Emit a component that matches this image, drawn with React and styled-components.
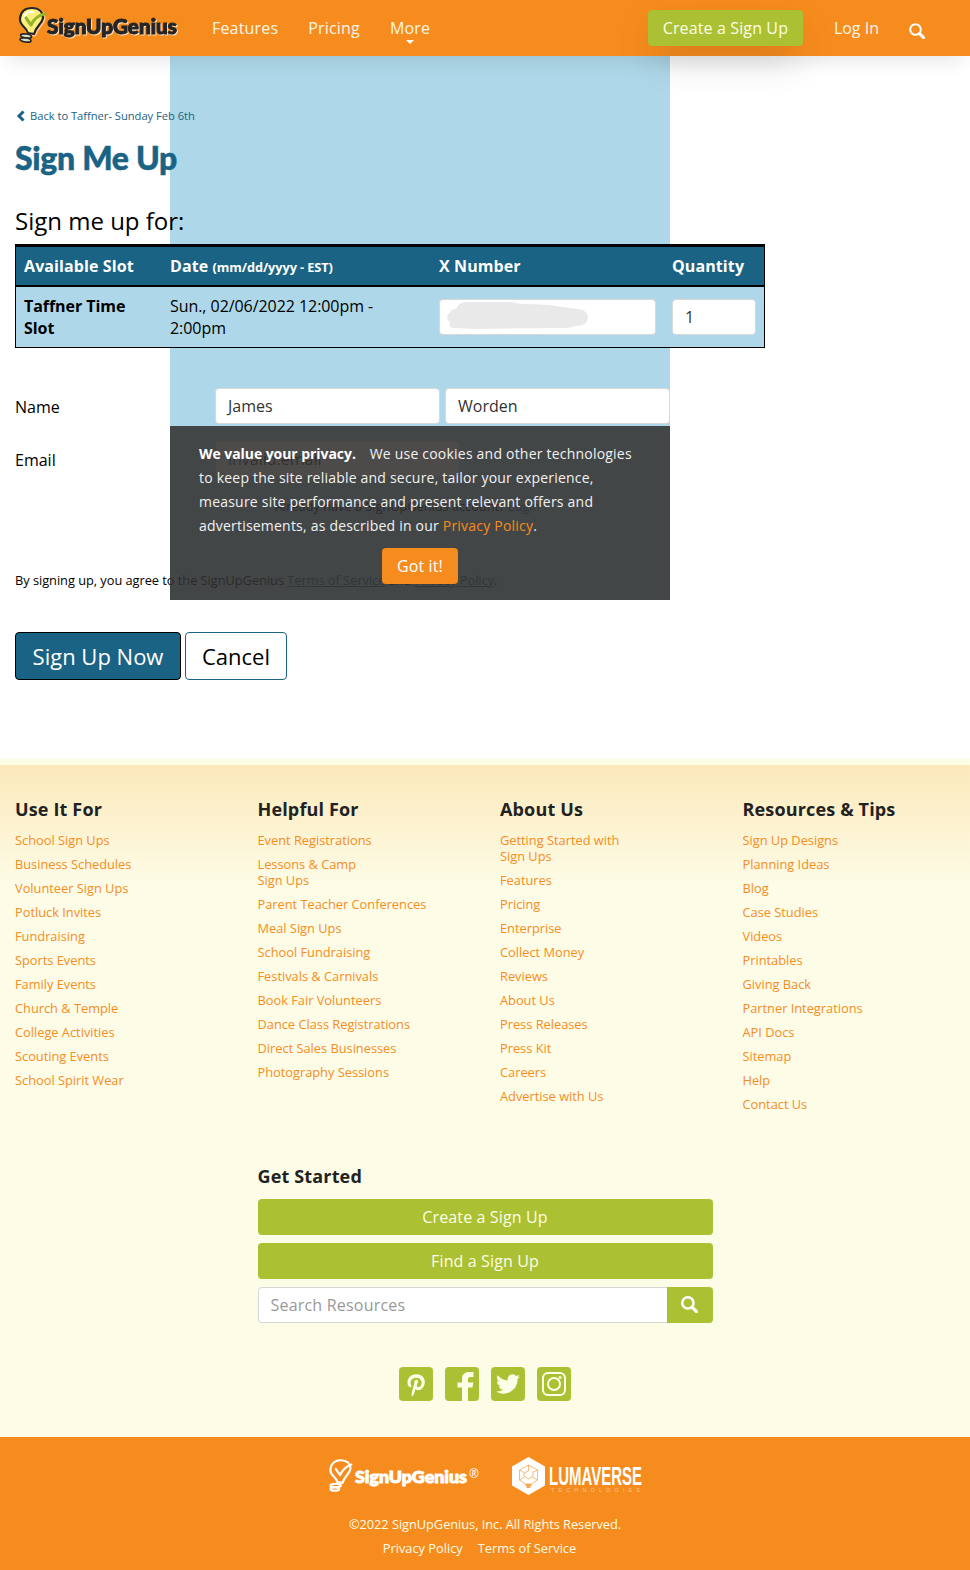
import React from "react";
import styled, { createGlobalStyle } from "styled-components";

const Global = createGlobalStyle`
  *, *::before, *::after { box-sizing: border-box; }
  body { margin: 0; background: #fff; color: #000; font: 16px/22px "Open Sans", sans-serif; }
  a { text-decoration: none; color: inherit; }
  h1, h2, h3, p, ul { margin: 0; padding: 0; }
`;

const Page = styled.div`
  position: relative;
  height: 1570px;
  display: flex;
  flex-direction: column;
  overflow: hidden;
`;

const Header = styled.header`
  position: relative;
  z-index: 2;
  height: 56px;
  flex: none;
  display: flex;
  align-items: flex-start;
  background: #f78c1e;
  color: #fdf6e6;
  padding-left: 16px;
  box-shadow: 0 12px 20px -8px rgba(0, 0, 0, 0.11);
`;
const NavLink = styled.a`
  position: relative;
  margin: 17px 0 0 ${(p) => p.$gap || 30}px;
  letter-spacing: ${(p) => (p.$gap ? 0 : 0.18)}px;
`;
const Caret = styled.span`
  position: absolute;
  left: 50%;
  top: 23px;
  margin-left: -4px;
  border: 4px solid transparent;
  border-top-color: #fff;
  border-bottom: 0;
`;
const CreateButton = styled.a`
  height: 36px;
  margin: 10px 0 0 auto;
  width: 155px;
  border-radius: 4px;
  text-align: center;
  line-height: 36px;
  letter-spacing: 0.13px;
  background: #abc133;
  color: #fefde6;
  box-shadow: 0 16px 40px -6px rgba(0, 0, 0, 0.2);
`;
const SearchLink = styled.a`
  margin: 23px 45px 0 30px;
  line-height: 0;
`;

const Backdrop = styled.div`
  position: absolute;
  left: 170px;
  top: 0;
  width: 500px;
  height: 600px;
  background: #aed8e9;
`;

const Main = styled.main`
  position: relative;
  height: 703px;
  flex: none;
  padding: 49px 15px 0;
`;
const BackLink = styled.a`
  display: flex;
  align-items: center;
  gap: 4px;
  font-size: 11.2px;
  letter-spacing: -0.03px;
  color: #1a6384;
  height: 22px;
`;
const Title = styled.h1`
  margin-top: 11px;
  font: 900 32px/40px "Lato Black", Lato, sans-serif;
  letter-spacing: -0.3px;
  -webkit-text-stroke: 0.5px #1a6384;
  color: #1a6384;
`;
const Subtitle = styled.h2`
  margin-top: 27px;
  font-size: 24px;
  font-weight: 400;
  line-height: 32px;
`;

const SlotTable = styled.section`
  width: 750px;
  margin-top: 7px;
  border: 1px solid #000;
  border-top-width: 3px;
`;
const SlotRow = styled.div`
  display: grid;
  grid-template-columns: 146px 269px 233px 100px;
  align-items: start;
  ${(p) => p.$head && `height: 40px; background: #1a6384; color: #fff; font-weight: 700; letter-spacing: 0.1px; border-bottom: 2px solid #000;`}
`;
const Cell = styled.div`
  padding: ${(p) => (p.$field ? "12px 8px" : "8px")};
  font-weight: ${(p) => (p.$bold ? 700 : "inherit")};
  small { font-size: 12.8px; line-height: 1; letter-spacing: -0.1px; }
`;
const SlotBody = styled(SlotRow)`
  background: #aed8e9;
  letter-spacing: -0.06px;
`;

const Field = styled.div`
  width: ${(p) => p.$w || "100%"};
  height: 36px;
  padding: 0 12px;
  border: 1px solid #d8d8d8;
  border-radius: 4px;
  background: #fff;
  color: #333;
  line-height: 34px;
  svg { display: block; margin-left: -6px; }
`;
const FormRow = styled.div`
  display: flex;
  gap: 5px;
  align-items: center;
  margin-top: ${(p) => p.$top}px;
`;
const Label = styled.label`
  width: 195px;
  padding-top: 2px;
`;
const Note = styled.p`
  font-size: 12.8px;
  letter-spacing: -0.03px;
  margin: ${(p) => p.$m};
  a { ${(p) => p.$lined && "text-decoration: underline;"} color: #1a6384; }
`;
const Actions = styled.div`
  display: flex;
  gap: 4px;
  margin-top: 41px;
`;
const ActionButton = styled.button`
  width: ${(p) => p.$w}px;
  height: 48px;
  padding: 0;
  border-radius: 4px;
  border: 1px solid ${(p) => (p.$primary ? "#000" : "#1a6384")};
  background: ${(p) => (p.$primary ? "#1a6384" : "#fff")};
  color: ${(p) => (p.$primary ? "#fff" : "#000")};
  font: 22px/46px "Open Sans", sans-serif;
`;

const Privacy = styled.aside`
  position: absolute;
  z-index: 3;
  left: 170px;
  top: 426px;
  width: 500px;
  height: 174px;
  padding: 16px 29px;
  background: rgba(50, 48, 47, 0.87);
  color: #f2f2f2;
  font-size: 14px;
  line-height: 24px;
  text-align: center;
  p { text-align: left; letter-spacing: 0.21px; }
  b { color: #fff; margin-right: 10px; letter-spacing: -0.06px; }
  p a { color: #f78c1e; }
`;
const GotIt = styled.button`
  width: 76px;
  height: 36px;
  margin-top: 10px;
  padding: 0;
  border: 0;
  border-radius: 4px;
  background: #f78c1e;
  color: #fff;
  font: 16px "Open Sans", sans-serif;
  letter-spacing: 0.1px;
`;

const Footer = styled.footer`
  height: 678px;
  flex: none;
  border-top: 6px solid #fefde6;
  background: linear-gradient(#fce9bb, #fdfce6 120px);
`;
const LinkColumns = styled.div`
  display: grid;
  grid-template-columns: repeat(4, 1fr);
  height: 367px;
  padding-top: 32px;
`;
const Column = styled.nav`
  padding: 0 15px;
`;
const ColumnTitle = styled.h3`
  font-size: 18px;
  line-height: 24px;
  letter-spacing: 0.15px;
  color: #222;
`;
const LinkList = styled.ul`
  list-style: none;
  margin-top: 11px;
  font-size: 12.8px;
  line-height: 16px;
  color: #f78c1e;
  li { margin-bottom: 8px; white-space: pre-line; }
`;
const GetStarted = styled.section`
  width: 455px;
  margin: 32px auto 0;
  ${ColumnTitle} { margin-bottom: 11px; }
`;
const WideButton = styled.a`
  display: block;
  margin-bottom: 8px;
  height: 36px;
  line-height: 36px;
  letter-spacing: 0.13px;
  border-radius: 4px;
  text-align: center;
  background: #abc133;
  color: #fefde6;
`;
const SearchBox = styled.div`
  display: flex;
  height: 36px;
  border-radius: 4px;
  overflow: hidden;
`;
const SearchInput = styled.div`
  flex: 1;
  padding: 0 12px;
  line-height: 34px;
  letter-spacing: 0.2px;
  color: #999;
  background: #fff;
  border: 1px solid #d5d5d5;
  border-right: 0;
  border-radius: 4px 0 0 4px;
`;
const SearchButton = styled.a`
  width: 46px;
  padding-bottom: 2px;
  background: #abc133;
  display: flex;
  align-items: center;
  justify-content: center;
`;
const Social = styled.div`
  display: flex;
  justify-content: center;
  gap: 12px;
  margin-top: 44px;
`;

const Legal = styled.div`
  flex: 1;
  background: #f78c1e;
  color: #fefde6;
  font-size: 12.8px;
  line-height: 24px;
  text-align: center;
  p { letter-spacing: -0.04px; }
`;
const Brands = styled.div`
  display: flex;
  gap: 31px;
  height: 75px;
  padding: 20px 0 0 329px;
`;
const LegalLinks = styled.div`
  display: flex;
  justify-content: center;
  gap: 15px;
  padding-right: 11px;
`;

function Magnifier({ size = 16, ring = 2 }) {
  return (
    <svg width={size} height={size} viewBox="0 0 16 16" fill="none" stroke="#fff">
      <circle cx="6.5" cy="6.5" r="5.3" strokeWidth={ring} />
      <path d="M10.6 10.6l4 4" strokeWidth="3" strokeLinecap="round" />
    </svg>
  );
}

const bulb = "M12 27C10 20 3 20 4 12C5 5 10 2 16 2C23 2 27 6 27 12C26 18 20 20 18 28Z";

function HeaderLogo() {
  return (
    <svg width="166" height="50" viewBox="0 0 166 50">
      <g transform="translate(0 6)" strokeLinecap="round" strokeLinejoin="round">
        <g fill="none" stroke="#fff" strokeWidth="3" opacity=".5" transform="translate(1 1)">
          <path d={bulb} />
        </g>
        <path d={bulb} fill="#fff07e" stroke="#252525" strokeWidth="2.2" />
        <path d="M8 13C8 8 12 5 17 6" fill="none" stroke="#fff" strokeWidth="2" />
        <ellipse cx="10" cy="30" rx="5.5" ry="2" transform="rotate(8 10 30)" fill="#d9d9c6" stroke="#252525" strokeWidth="1.7" />
        <ellipse cx="9.500" cy="34" rx="5.500" ry="2" transform="rotate(8 9.500 34)" fill="#d9d9c6" stroke="#252525" strokeWidth="1.700" />
        <path d="M10 12l5 7C18 13 22 9 29 8" fill="none" stroke="#95b52c" strokeWidth="3.2" />
      </g>
      <text x="31" y="34" textLength="130" lengthAdjust="spacingAndGlyphs" fontFamily="Lato Black, Lato" fontWeight="900" fontSize="20" fill="#252525" stroke="#252525" strokeWidth="1" style={{ filter: "drop-shadow(1px 1px 0 #ffe3c2)" }}>SignUpGenius</text>
    </svg>
  );
}

function FooterLogo() {
  return (
    <svg width="151" height="42" viewBox="0 0 151 42">
      <g transform="translate(-2 1.5) scale(.87)" fill="none" stroke="#fff" strokeWidth="2.5" strokeLinecap="round" strokeLinejoin="round">
        <path d={bulb} />
        <path d="M10 12l5 7C18 13 22 9 28 7" />
        <ellipse cx="10" cy="31" rx="6" ry="2" />
        <ellipse cx="9" cy="35" rx="5" ry="2" />
      </g>
      <text x="26" y="25.5" textLength="112" lengthAdjust="spacingAndGlyphs" fontFamily="Lato Black, Lato" fontWeight="900" fontSize="17.500" fill="#fff" stroke="#fff">SignUpGenius</text>
      <text x="140" y="21" fontFamily="Open Sans" fontSize="12" fill="#fff">®</text>
    </svg>
  );
}

function LumaverseLogo() {
  return (
    <svg width="132" height="40" viewBox="0 0 132 40">
      <path d="M17.500 0L34 9.500V28.500L17.500 38L1 28.500V9.500Z" fill="#fff" />
      <g fill="none" stroke="#f9b979" strokeWidth="1">
        <path d="M17.500 8l9 5v10l-6 4h-6l-6-4v-10zM8.500 13l5 3 4-2v-6M26.500 13l-4.500 2v4l-4.500 3-4.500-3v-3M8.500 23l5-3M26.500 23l-5-3" />
        <path d="M14.500 28h6M15.500 30h4" stroke="#f78c1e" strokeWidth="1.500" />
      </g>
      <text x="38" y="28" textLength="93" lengthAdjust="spacingAndGlyphs" transform="translate(0 -9.240) scale(1 1.33)" fontFamily="Liberation Sans Narrow, Liberation Sans" fontWeight="700" fontSize="19" fill="#fff">LUMAVERSE</text>
      <text x="40" y="35" textLength="89" fontFamily="Liberation Sans" fontSize="5.500" fill="#fdc48a">TECHNOLOGIES</text>
    </svg>
  );
}

const socialShapes = {
  pinterest: <path d="M13.500 29.500C11 29 14.500 20 15.300 16.500C14.500 13 18.500 11.500 19 14.300C19.200 16 16.500 19 18.500 20C21.500 21 23 17 22.500 14.500C21.500 9 12 9.500 11.500 15.500C11.500 18 13 18.500 12 20.300C9 20 8.300 17 8.500 15C9 5 25 4.500 25.800 14.500C26 21 20.500 25.500 16.500 22C15.700 24.500 15 28 13.500 29.500Z" />,
  facebook: <path d="M17 34V20.500H12.500V15.500H17V12C17 7 20 5 24 5H28.500V10H25.500C23.500 10 23 11 23 12.500V15.500H28.300L27.500 20.500H23V34Z" />,
  twitter: <path transform="translate(5 5)" d="M24 4.600a10 10 0 0 1-2.800.8A4.900 4.900 0 0 0 23.300 2.700a10 10 0 0 1-3.100 1.200 4.900 4.900 0 0 0-8.400 4.500A14 14 0 0 1 1.700 3.200a4.900 4.900 0 0 0 1.500 6.600 5 5 0 0 1-2.200-.6 4.900 4.900 0 0 0 3.900 4.900 5 5 0 0 1-2.200.1 4.900 4.900 0 0 0 4.600 3.400A9.900 9.900 0 0 1 0 19.500a14 14 0 0 0 21.500-12.400A10 10 0 0 0 24 4.600z" />,
  instagram: (
    <g fill="none" stroke="#fefde6" strokeWidth="2">
      <rect x="6" y="6" width="22" height="22" rx="5" />
      <circle cx="17" cy="17" r="6" />
      <circle cx="23" cy="10.500" r=".6" />
    </g>
  ),
};

function SocialIcon({ name }) {
  return (
    <svg width="34" height="34" viewBox="0 0 34 34" fill="#fefde6">
      <rect width="34" height="34" rx="4" fill="#abc133" />
      {socialShapes[name]}
    </svg>
  );
}

const columns = [
  ["Use It For", ["School Sign Ups", "Business Schedules", "Volunteer Sign Ups", "Potluck Invites", "Fundraising", "Sports Events", "Family Events", "Church & Temple", "College Activities", "Scouting Events", "School Spirit Wear"]],
  ["Helpful For", ["Event Registrations", "Lessons & Camp\nSign Ups", "Parent Teacher Conferences", "Meal Sign Ups", "School Fundraising", "Festivals & Carnivals", "Book Fair Volunteers", "Dance Class Registrations", "Direct Sales Businesses", "Photography Sessions"]],
  ["About Us", ["Getting Started with\nSign Ups", "Features", "Pricing", "Enterprise", "Collect Money", "Reviews", "About Us", "Press Releases", "Press Kit", "Careers", "Advertise with Us"]],
  ["Resources & Tips", ["Sign Up Designs", "Planning Ideas", "Blog", "Case Studies", "Videos", "Printables", "Giving Back", "Partner Integrations", "API Docs", "Sitemap", "Help", "Contact Us"]],
];

export default function App() {
  return (
    <Page>
      <Global />
      <Backdrop />
      <Header>
        <HeaderLogo />
        <NavLink>Features</NavLink>
        <NavLink>Pricing</NavLink>
        <NavLink>More<Caret /></NavLink>
        <CreateButton>Create a Sign Up</CreateButton>
        <NavLink $gap={31}>Log In</NavLink>
        <SearchLink><Magnifier /></SearchLink>
      </Header>

      <Main>
        <BackLink>
          <svg width="11" height="12" viewBox="0 0 11 12"><path d="M8.500 1.500L4 6l4.500 4.500" fill="none" stroke="#1a6384" strokeWidth="3" /></svg>
          Back to Taffner- Sunday Feb 6th
        </BackLink>
        <Title>Sign Me Up</Title>
        <Subtitle>Sign me up for:</Subtitle>
        <SlotTable>
          <SlotRow $head>
            <Cell>Available Slot</Cell>
            <Cell>Date <small>(mm/dd/yyyy - EST)</small></Cell>
            <Cell>X Number</Cell>
            <Cell>Quantity</Cell>
          </SlotRow>
          <SlotBody>
            <Cell $bold>Taffner Time Slot</Cell>
            <Cell>Sun., 02/06/2022 12:00pm - 2:00pm</Cell>
            <Cell $field>
              <Field>
                <svg width="144" height="32" viewBox="0 0 144 32">
                  <path d="M1 17Q1 14 4 13Q5 9 10 9Q13 2 20 2H66Q72 4 82 4L104 5Q115 7 132 9Q142 10 142 18Q141 26 130 26Q124 28 118 28L28 29L10 28Q2 29 4 22Q1 20 1 17Z" fill="#e9e9e9" />
                </svg>
              </Field>
            </Cell>
            <Cell $field><Field>1</Field></Cell>
          </SlotBody>
        </SlotTable>

        <FormRow $top={40}>
          <Label>Name</Label>
          <Field $w="225px">James</Field>
          <Field $w="225px">Worden</Field>
        </FormRow>
        <FormRow $top={17}>
          <Label>Email</Label>
          <Field $w="245px">invalid.email</Field>
        </FormRow>
        <Note $m="18px 0 0 260px">Already have a SignUpGenius account? <a>Login</a></Note>
        <Note $m="52px 0 0" $lined>
          By signing up, you agree to the SignUpGenius <a>Terms of Service</a> and <a>Privacy Policy</a>.
        </Note>
        <Actions>
          <ActionButton $primary $w={166}>Sign Up Now</ActionButton>
          <ActionButton $w={102}>Cancel</ActionButton>
        </Actions>
      </Main>

      <Privacy>
        <p><b>We value your privacy.</b> We use cookies and other technologies to keep the site reliable and secure, tailor your experience, measure site performance and present relevant offers and advertisements, as described in our <a>Privacy Policy</a>.</p>
        <GotIt>Got it!</GotIt>
      </Privacy>

      <Footer>
        <LinkColumns>
          {columns.map(([title, links]) => (
            <Column key={title}>
              <ColumnTitle>{title}</ColumnTitle>
              <LinkList>{links.map((l) => <li key={l}><a>{l}</a></li>)}</LinkList>
            </Column>
          ))}
        </LinkColumns>
        <GetStarted>
          <ColumnTitle>Get Started</ColumnTitle>
          <WideButton>Create a Sign Up</WideButton>
          <WideButton>Find a Sign Up</WideButton>
          <SearchBox>
            <SearchInput>Search Resources</SearchInput>
            <SearchButton><Magnifier size={17} ring={2.4} /></SearchButton>
          </SearchBox>
        </GetStarted>
        <Social>
          {Object.keys(socialShapes).map((n) => <SocialIcon key={n} name={n} />)}
        </Social>
      </Footer>

      <Legal>
        <Brands><FooterLogo /><LumaverseLogo /></Brands>
        <p>©2022 SignUpGenius, Inc. All Rights Reserved.</p>
        <LegalLinks><a>Privacy Policy</a><a>Terms of Service</a></LegalLinks>
      </Legal>
    </Page>
  );
}
